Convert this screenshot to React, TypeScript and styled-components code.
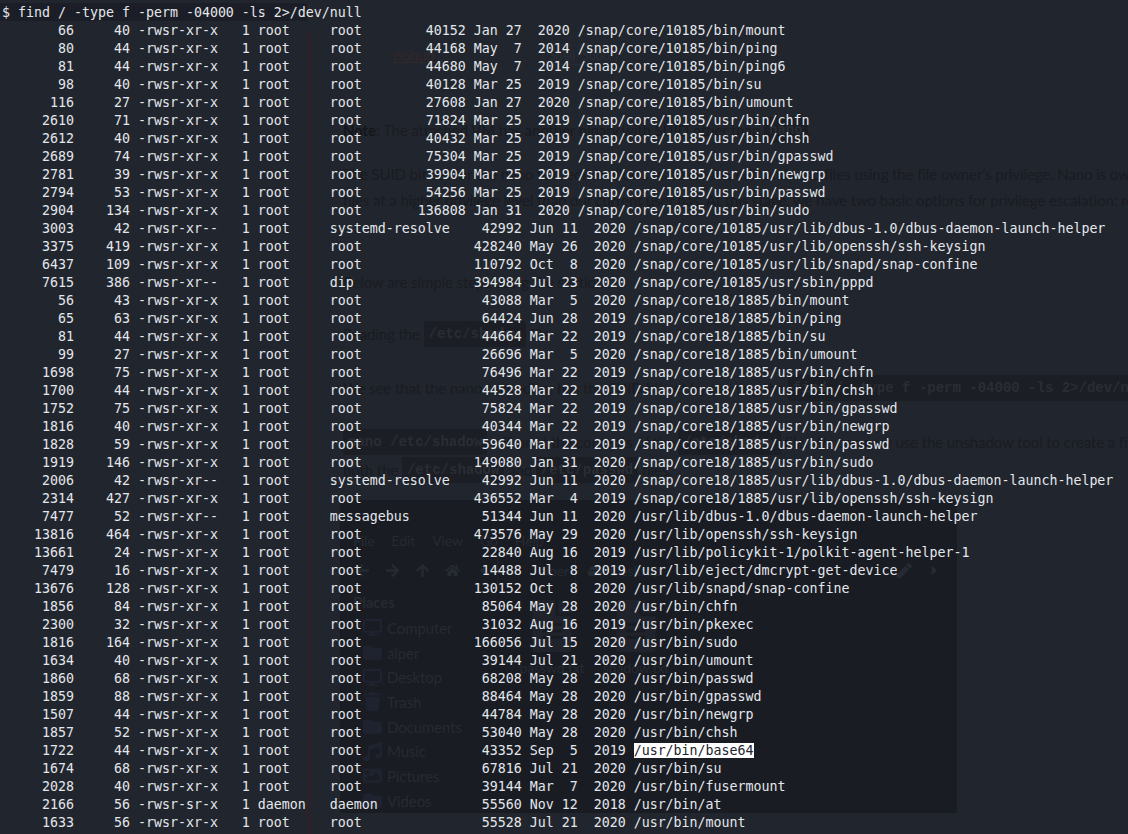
import React from 'react'
import styled, { createGlobalStyle } from 'styled-components'
import {
  FaArrowLeft,
  FaArrowRight,
  FaArrowUp,
  FaCaretLeft,
  FaCaretRight,
  FaDesktop,
  FaFileAlt,
  FaFolder,
  FaHdd,
  FaHome,
  FaImage,
  FaMusic,
  FaPen,
  FaTrash,
} from 'react-icons/fa'

const GlobalStyle = createGlobalStyle`
  html, body {
    margin: 0;
    padding: 0;
    background: #21252d;
  }
`

const Screen = styled.div`
  position: relative;
  width: 1128px;
  height: 834px;
  overflow: hidden;
  background: #21252d;
`

/* the web page that shows through the see-through terminal */
const Behind = styled.div`
  position: absolute;
  inset: 0;
  display: flex;
  flex-direction: column;
  font-family: 'Lato', sans-serif;
  font-size: 15px;
  letter-spacing: -0.1px;
  color: #191c22;
`
const TopStrip = styled.div`
  height: 33px;
  display: flex;
  align-items: flex-start;
  overflow: hidden;
`
const CommandBand = styled.div`
  width: 307px;
  height: 18px;
  margin-top: 3px;
  background: #1b1e26;
`
const ClippedHost = styled.div`
  margin: -17px 0 0 213px;
  line-height: 20px;
  font-size: 15px;
  color: #363a43;
  white-space: pre;
`
const Article = styled.div`
  flex: 1;
  margin-left: 307px;
  padding-left: 32px;
  border-left: 4px solid #2a2129;
  display: flex;
  flex-direction: column;
  min-width: 0;
`
const Line = styled.div<{ $gap: number }>`
  margin-top: ${(p) => p.$gap}px;
  height: 26px;
  line-height: 26px;
  white-space: pre;
  display: flex;
  align-items: center;
`
const Bold = styled.b`
  font-weight: 700;
  color: #14161b;
`
const Code = styled.code`
  height: 26px;
  line-height: 26px;
  padding: 0 5px;
  background: #1b1e25;
  border-radius: 2px;
  color: #2a2d34;
  font-family: 'Liberation Mono', monospace;
  font-size: 14px;
  font-weight: 700;
  letter-spacing: 0;
`
const NohupLink = styled.span`
  color: #332729;
  text-decoration: underline;
  margin-left: 50px;
  font-size: 15px;
`
const TagBox = styled.span`
  margin-left: 107px;
  padding: 0 6px;
  border: 1px solid #262a32;
  color: #2a2e36;
  font-size: 13px;
  line-height: 18px;
`

const FileWindow = styled.div`
  margin: 17px 0 0 -3px;
  width: 617px;
  height: 313px;
  background: #191c23;
  color: #262a32;
  display: flex;
  flex-direction: column;
`
const MenuBar = styled.div`
  margin-top: 30px;
  height: 22px;
  padding-left: 13px;
  display: flex;
  align-items: center;
  gap: 17px;
  font-size: 14px;
`
const ToolBar = styled.div`
  margin-top: 6px;
  height: 30px;
  padding: 0 8px 0 7px;
  display: flex;
  align-items: center;
  color: #262a32;
  font-size: 14px;
`
const ToolIcon = styled.span`
  width: 30px;
  display: flex;
  justify-content: center;
  font-size: 15px;
`
const PathButton = styled.span<{ $width: number }>`
  width: ${(p) => p.$width}px;
  height: 28px;
  display: flex;
  align-items: center;
  justify-content: flex-end;
  gap: 8px;
  padding-right: 6px;
  box-sizing: border-box;
  border-left: 1px solid #20232b;
`
const Spacer = styled.span`
  flex: 1;
`
const WindowBody = styled.div`
  margin-top: 5px;
  display: flex;
`
const Sidebar = styled.div`
  width: 170px;
  display: flex;
  flex-direction: column;
`
const PlacesTitle = styled.div`
  height: 26px;
  line-height: 24px;
  padding-left: 13px;
  font-size: 15px;
  font-weight: 700;
`
const Place = styled.div`
  height: 24.7px;
  padding-left: 22px;
  display: flex;
  align-items: center;
  gap: 5px;
  font-size: 15px;
`
const PlaceIcon = styled.span`
  width: 20px;
  display: flex;
  justify-content: center;
  font-size: 19px;
  color: #1f2330;
`
const FileGrid = styled.div`
  padding-top: 10px;
  display: flex;
`
const FileCell = styled.div`
  width: 84px;
  display: flex;
  flex-direction: column;
  align-items: center;
  gap: 7px;
  font-size: 14px;
  color: #262a32;
  svg {
    color: #20232b;
  }
`

const Terminal = styled.pre`
  position: relative;
  margin: 0;
  padding: 4px 0 0 2px;
  font-family: 'DejaVu Sans Mono', 'Liberation Mono', monospace;
  font-size: 13.3px;
  letter-spacing: -0.01px;
  color: #e4e7ec;
`
const Row = styled.div`
  height: 18px;
  line-height: 18px;
  white-space: pre;
`
const Selected = styled.span`
  background: #ffffff;
  color: #21252d;
`

const R = '-rwsr-xr-x'
const L = '-rwsr-xr--'
const core = '/snap/core/10185'
const core18 = '/snap/core18/1885'

// inode blocks perms user group size month day year path
const listing = `66 40 ${R} root root 40152 Jan 27 2020 ${core}/bin/mount
80 44 ${R} root root 44168 May 7 2014 ${core}/bin/ping
81 44 ${R} root root 44680 May 7 2014 ${core}/bin/ping6
98 40 ${R} root root 40128 Mar 25 2019 ${core}/bin/su
116 27 ${R} root root 27608 Jan 27 2020 ${core}/bin/umount
2610 71 ${R} root root 71824 Mar 25 2019 ${core}/usr/bin/chfn
2612 40 ${R} root root 40432 Mar 25 2019 ${core}/usr/bin/chsh
2689 74 ${R} root root 75304 Mar 25 2019 ${core}/usr/bin/gpasswd
2781 39 ${R} root root 39904 Mar 25 2019 ${core}/usr/bin/newgrp
2794 53 ${R} root root 54256 Mar 25 2019 ${core}/usr/bin/passwd
2904 134 ${R} root root 136808 Jan 31 2020 ${core}/usr/bin/sudo
3003 42 ${L} root systemd-resolve 42992 Jun 11 2020 ${core}/usr/lib/dbus-1.0/dbus-daemon-launch-helper
3375 419 ${R} root root 428240 May 26 2020 ${core}/usr/lib/openssh/ssh-keysign
6437 109 ${R} root root 110792 Oct 8 2020 ${core}/usr/lib/snapd/snap-confine
7615 386 ${L} root dip 394984 Jul 23 2020 ${core}/usr/sbin/pppd
56 43 ${R} root root 43088 Mar 5 2020 ${core18}/bin/mount
65 63 ${R} root root 64424 Jun 28 2019 ${core18}/bin/ping
81 44 ${R} root root 44664 Mar 22 2019 ${core18}/bin/su
99 27 ${R} root root 26696 Mar 5 2020 ${core18}/bin/umount
1698 75 ${R} root root 76496 Mar 22 2019 ${core18}/usr/bin/chfn
1700 44 ${R} root root 44528 Mar 22 2019 ${core18}/usr/bin/chsh
1752 75 ${R} root root 75824 Mar 22 2019 ${core18}/usr/bin/gpasswd
1816 40 ${R} root root 40344 Mar 22 2019 ${core18}/usr/bin/newgrp
1828 59 ${R} root root 59640 Mar 22 2019 ${core18}/usr/bin/passwd
1919 146 ${R} root root 149080 Jan 31 2020 ${core18}/usr/bin/sudo
2006 42 ${L} root systemd-resolve 42992 Jun 11 2020 ${core18}/usr/lib/dbus-1.0/dbus-daemon-launch-helper
2314 427 ${R} root root 436552 Mar 4 2019 ${core18}/usr/lib/openssh/ssh-keysign
7477 52 ${L} root messagebus 51344 Jun 11 2020 /usr/lib/dbus-1.0/dbus-daemon-launch-helper
13816 464 ${R} root root 473576 May 29 2020 /usr/lib/openssh/ssh-keysign
13661 24 ${R} root root 22840 Aug 16 2019 /usr/lib/policykit-1/polkit-agent-helper-1
7479 16 ${R} root root 14488 Jul 8 2019 /usr/lib/eject/dmcrypt-get-device
13676 128 ${R} root root 130152 Oct 8 2020 /usr/lib/snapd/snap-confine
1856 84 ${R} root root 85064 May 28 2020 /usr/bin/chfn
2300 32 ${R} root root 31032 Aug 16 2019 /usr/bin/pkexec
1816 164 ${R} root root 166056 Jul 15 2020 /usr/bin/sudo
1634 40 ${R} root root 39144 Jul 21 2020 /usr/bin/umount
1860 68 ${R} root root 68208 May 28 2020 /usr/bin/passwd
1859 88 ${R} root root 88464 May 28 2020 /usr/bin/gpasswd
1507 44 ${R} root root 44784 May 28 2020 /usr/bin/newgrp
1857 52 ${R} root root 53040 May 28 2020 /usr/bin/chsh
1722 44 ${R} root root 43352 Sep 5 2019 /usr/bin/base64
1674 68 ${R} root root 67816 Jul 21 2020 /usr/bin/su
2028 40 ${R} root root 39144 Mar 7 2020 /usr/bin/fusermount
2166 56 -rwsr-sr-x daemon daemon 55560 Nov 12 2018 /usr/bin/at
1633 56 ${R} root root 55528 Jul 21 2020 /usr/bin/mount`
  .split('\n')
  .map((line) => line.split(' '))

const places: [string, React.ReactNode][] = [
  ['Computer', <FaDesktop />],
  ['alper', <FaFolder />],
  ['Desktop', <FaDesktop />],
  ['Trash', <FaTrash />],
  ['Documents', <FaFolder />],
  ['Music', <FaMusic />],
  ['Pictures', <FaImage />],
  ['Videos', <FaFolder />],
]

const App = () => {
  return (
    <Screen>
      <GlobalStyle />
      <Behind>
        <TopStrip>
          <CommandBand />
          <ClippedHost>10.10.55.83</ClippedHost>
        </TopStrip>
        <Article>
          <Line $gap={9}>
            <NohupLink>nohup</NohupLink>
            <TagBox>Shell  Sudo</TagBox>
          </Line>
          <Line $gap={49}>
            <Bold>Note</Bold>: The attached VM has another binary with SUID other than <Code>nano</Code>.
          </Line>
          <Line $gap={18}>The SUID bit set for the nano text editor allows us to create, edit and read files using the file owner’s privilege. Nano is owned</Line>
          <Line $gap={0}>files at a higher privilege level than our current user has. At this stage, we have two basic options for privilege escalation: reading</Line>
          <Line $gap={56}>Below are simple steps using the section.</Line>
          <Line $gap={26}>Reading the <Code>/etc/shadow</Code> file</Line>
          <Line $gap={28}>We see that the nano text editor has the SUID bit set by running the <Code>find / -type f -perm -04000 -ls 2&gt;/dev/null</Code></Line>
          <Line $gap={28}>
            <Code>nano /etc/shadow</Code> will print the contents of the <Code>/etc/shadow</Code> file. We can now use the unshadow tool to create a file
          </Line>
          <Line $gap={2}>both the <Code>/etc/shadow</Code> and <Code>/etc/passwd</Code> files.</Line>
          <FileWindow>
            <MenuBar>
              <span>File</span>
              <span>Edit</span>
              <span>View</span>
              <span>Go</span>
              <span>Help</span>
            </MenuBar>
            <ToolBar>
              <ToolIcon><FaArrowLeft /></ToolIcon>
              <ToolIcon><FaArrowRight /></ToolIcon>
              <ToolIcon><FaArrowUp /></ToolIcon>
              <ToolIcon><FaHome /></ToolIcon>
              <ToolIcon><FaCaretLeft /></ToolIcon>
              <PathButton $width={78}>alper</PathButton>
              <PathButton $width={92}><FaHdd />Desktop</PathButton>
              <Spacer />
              <ToolIcon><FaPen /></ToolIcon>
              <ToolIcon><FaCaretRight /></ToolIcon>
            </ToolBar>
            <WindowBody>
              <Sidebar>
                <PlacesTitle>Places</PlacesTitle>
                {places.map(([name, icon]) => (
                  <Place key={name}>
                    <PlaceIcon>{icon}</PlaceIcon>
                    {name}
                  </Place>
                ))}
              </Sidebar>
              <FileGrid>
                <FileCell><FaFileAlt size={52} />passwd.txt</FileCell>
                <FileCell><FaFileAlt size={52} />shadow.txt</FileCell>
              </FileGrid>
            </WindowBody>
          </FileWindow>
        </Article>
      </Behind>
      <Terminal>
        <Row>$ find / -type f -perm -04000 -ls 2&gt;/dev/null</Row>
        {listing.map(([inode, blocks, perms, user, group, size, month, day, year, path], i) => {
          // find -ls widens its columns once systemd-resolve turns up in the list
          const width = i < 11 ? 17 : 24
          const head = `${inode.padStart(9)}${blocks.padStart(7)} ${perms}   1 ${user.padEnd(9)}${group}${size.padStart(width - group.length)} ${month} ${day.padStart(2)}  ${year} `
          return (
            <Row key={i}>
              {head}
              {path === '/usr/bin/base64' ? <Selected>{path}</Selected> : path}
            </Row>
          )
        })}
      </Terminal>
    </Screen>
  )
}

export default App
